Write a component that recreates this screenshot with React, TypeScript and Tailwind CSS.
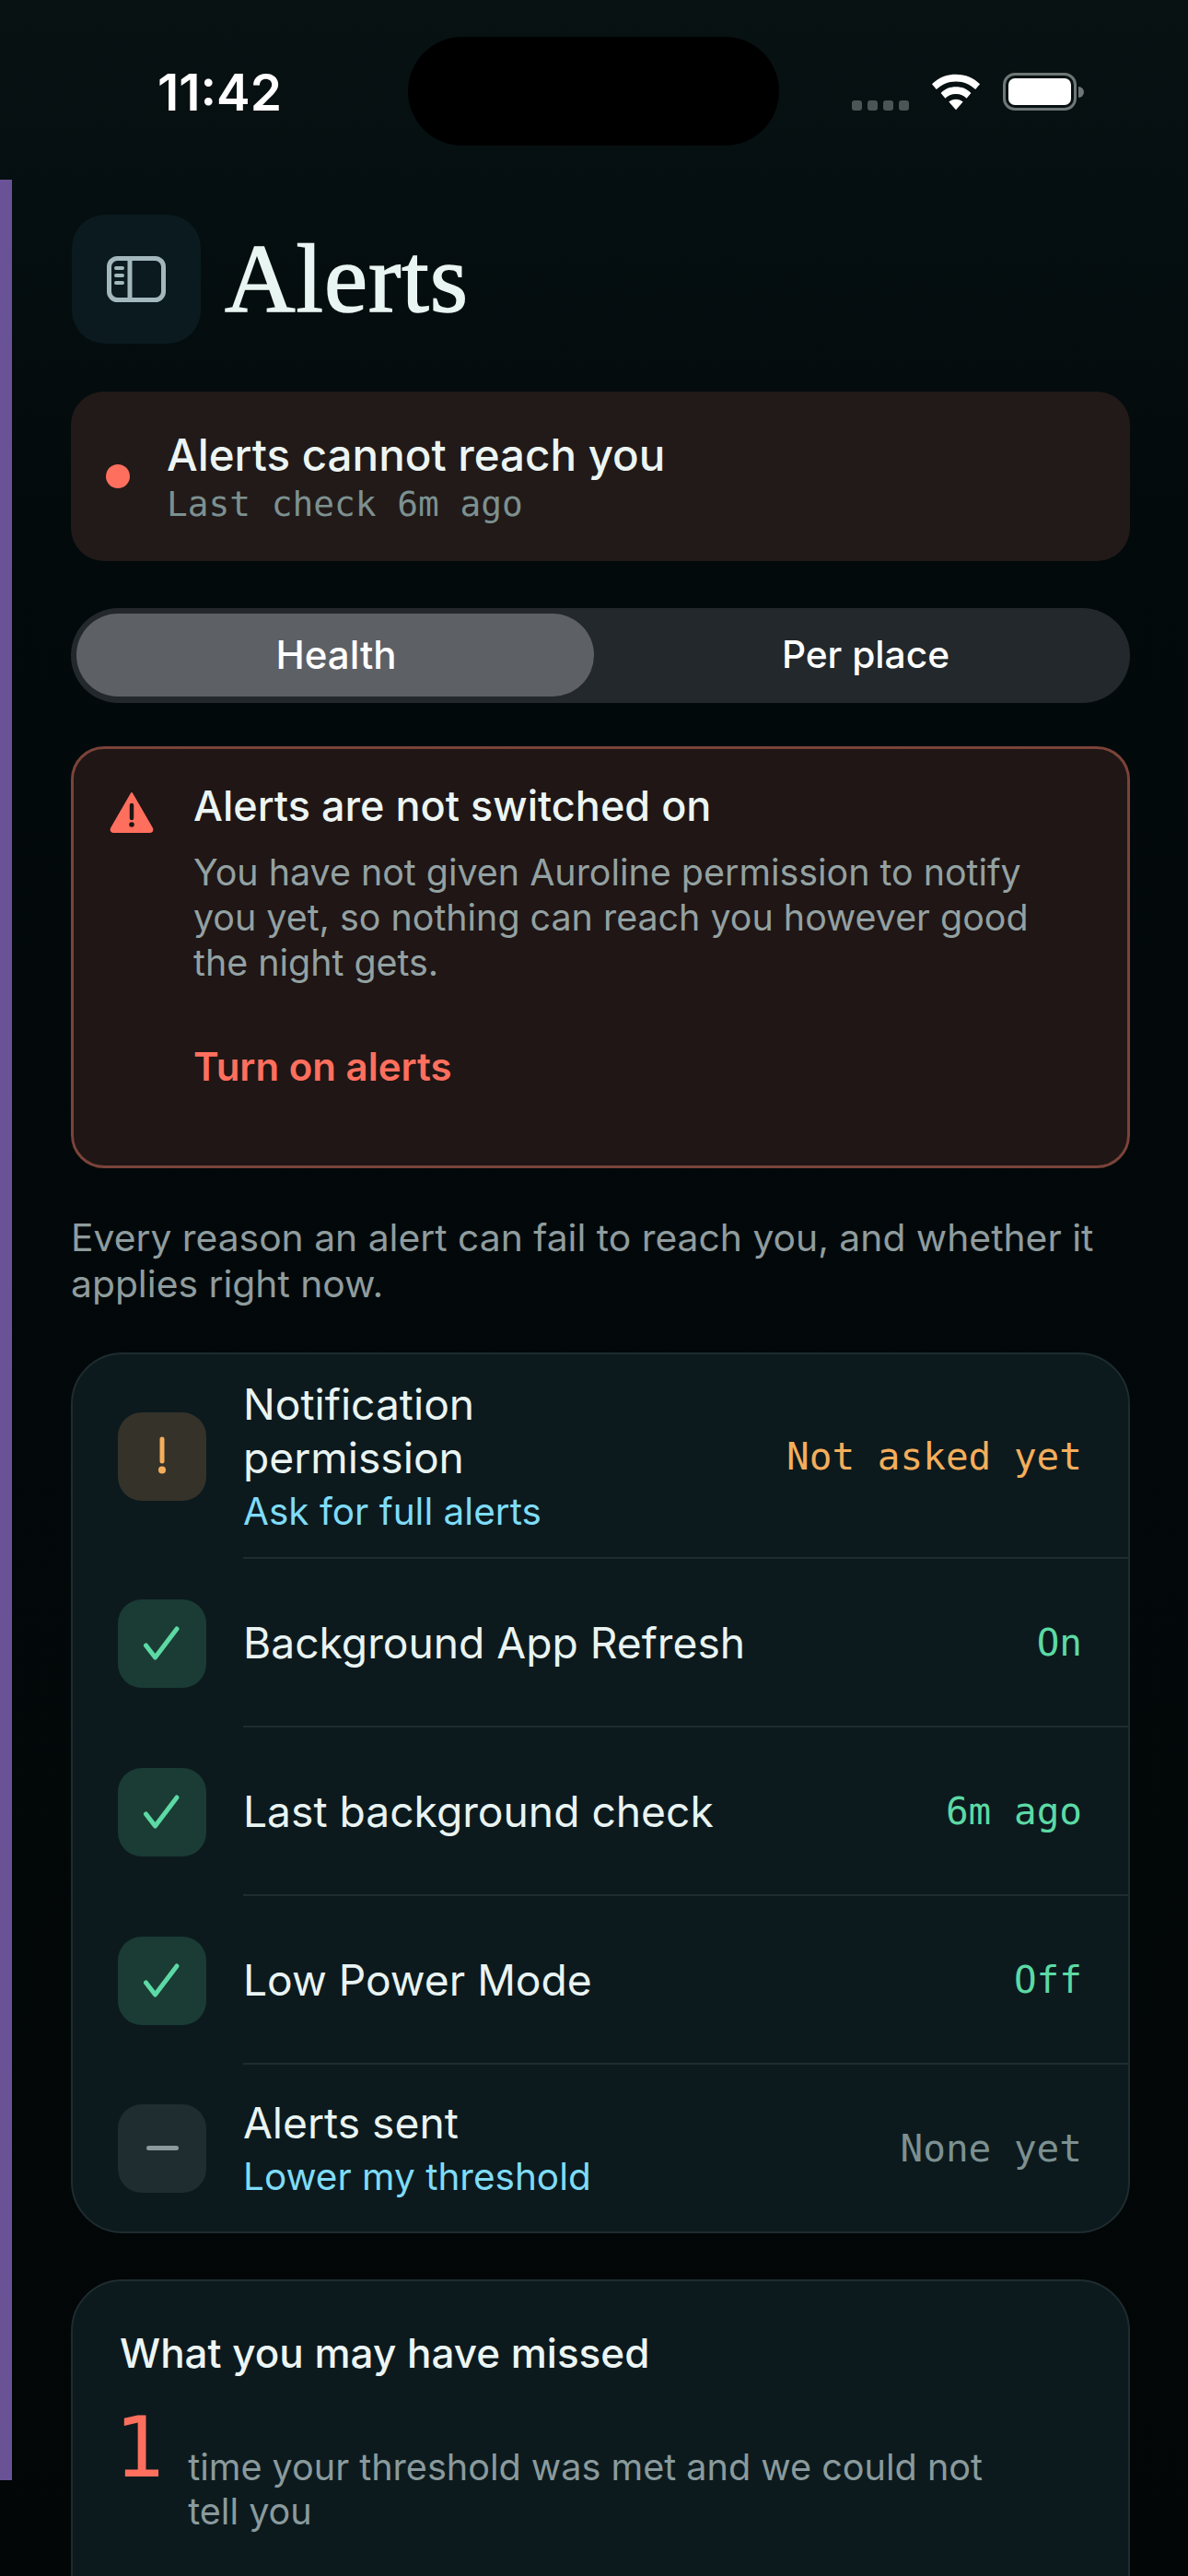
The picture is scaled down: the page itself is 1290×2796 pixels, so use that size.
import React from "react";

const sans = "font-['Inter','Noto_Sans',sans-serif]";
const mono = "font-['DejaVu_Sans_Mono','Liberation_Mono',monospace]";

function Tile({ kind }: { kind: "warn" | "ok" | "none" }) {
  const bg = kind === "warn" ? "bg-[#35322a]" : kind === "ok" ? "bg-[#1b3b35]" : "bg-[#1f2c30]";
  return (
    <div className={`flex h-[96px] w-[96px] shrink-0 items-center justify-center rounded-[26px] ${bg}`}>
      {kind === "warn" && (
        <svg width="20" height="44" viewBox="0 0 20 44">
          <path d="M10 3V27" stroke="#f4ae5b" strokeWidth="5" strokeLinecap="round" />
          <circle cx="10" cy="36.500" r="4" fill="#f4ae5b" />
        </svg>
      )}
      {kind === "ok" && (
        <svg width="44" height="40" viewBox="0 0 44 40" fill="none">
          <path d="M4.500 22L14.500 35L38 4" stroke="#5cd9a4" strokeWidth="5" strokeLinecap="round" strokeLinejoin="round" />
        </svg>
      )}
      {kind === "none" && <div className="h-[5px] w-[35px] rounded-full bg-[#8b9a9c]" />}
    </div>
  );
}

function Row({
  kind,
  title,
  link,
  value,
  valueColor,
  height,
  last,
}: {
  kind: "warn" | "ok" | "none";
  title: React.ReactNode;
  link?: string;
  value: string;
  valueColor: string;
  height: string;
  last?: boolean;
}) {
  return (
    <div className={`flex items-center pl-[49px] ${height}`}>
      <Tile kind={kind} />
      <div className={`ml-[40px] flex h-full flex-1 items-center justify-between pr-[50px] ${last ? "" : "border-b-2 border-[#1e2c30]"}`}>
        <div>
          <div className="text-[46.200px] leading-[58px] text-[#e9f4f2]">{title}</div>
          {link && <div className="mt-[5px] text-[40.500px] leading-[50px] text-[#7fdcf8]">{link}</div>}
        </div>
        <div className={`${mono} mt-[3px] text-[41px] ${valueColor}`}>{value}</div>
      </div>
    </div>
  );
}

export default function App() {
  return (
    <div className={`${sans} relative h-[2796px] w-[1290px] overflow-hidden bg-gradient-to-b from-[#081213] via-[#030a0c] via-[20%] to-[#020607]`}>
      <div className="absolute left-0 top-[195px] h-[2497px] w-[13px] bg-[#6a5296]" />

      {/* status bar */}
      <div className="relative flex h-[198px] items-start justify-between pl-[171px] pr-[113px]">
        <div className="pt-[72px] text-[55px] font-semibold leading-[56px] text-white">11:42</div>
        <div className="absolute left-[443px] top-[40px] h-[118px] w-[403px] rounded-[59px] bg-black" />
        <div className="flex items-end gap-[24px] pt-[79px]">
          <div className="flex gap-[6px]">
            <span className="h-[11px] w-[11px] rounded-[3px] bg-[#4b5555]" />
            <span className="h-[11px] w-[11px] rounded-[3px] bg-[#4b5555]" />
            <span className="h-[11px] w-[11px] rounded-[3px] bg-[#4b5555]" />
            <span className="h-[11px] w-[11px] rounded-[3px] bg-[#4b5555]" />
          </div>
          <svg width="54" height="40" viewBox="0 0 56 40" fill="white">
            <path d="M28 0C17 0 8 4 1 11L6 17C12 11 19 8 28 8C37 8 44 11 50 17L55 11C48 4 39 0 28 0Z" />
            <path d="M28 14C21 14 16 16 11 21L16 27C19 24 23 22 28 22C33 22 37 24 40 27L45 21C40 16 35 14 28 14Z" />
            <path d="M28 28C25 28 22 29 20 31L28 40L36 31C34 29 31 28 28 28Z" />
          </svg>
          <div className="flex items-center">
            <div className="h-[41px] w-[80px] rounded-[13px] border-[3px] border-[#6e7676] p-[3px]">
              <div className="h-full w-full rounded-[7px] bg-white" />
            </div>
            <div className="ml-[2px] h-[12px] w-[6px] rounded-r-full bg-[#6e7676]" />
          </div>
        </div>
      </div>

      <div className="pl-[77px] pr-[63px]">
        {/* header */}
        <div className="mt-[35px] flex h-[140px] items-center gap-[26px] pl-[1px]">
          <div className="flex h-[140px] w-[140px] items-center justify-center rounded-[36px] bg-[#0a1a1e]">
            <svg width="64" height="50" viewBox="0 0 64 50" fill="none">
              <rect x="2.500" y="2.500" width="59" height="45" rx="9" stroke="#a3b8bc" strokeWidth="5" />
              <path d="M25 3V47" stroke="#a3b8bc" strokeWidth="5" />
              <path d="M10 13H17M10 21H17M10 29H17" stroke="#a3b8bc" strokeWidth="4" strokeLinecap="round" />
            </svg>
          </div>
          <h1 className="font-['Liberation_Serif',serif] text-[106px] font-normal leading-none tracking-[1px] text-[#e9f5f2] [-webkit-text-stroke:1.500px_#e9f5f2]">Alerts</h1>
        </div>

        {/* status */}
        <div className="mt-[52px] flex h-[184px] items-center rounded-[36px] bg-[#211a18] pl-[38px]">
          <div className="h-[26px] w-[26px] rounded-full bg-[#ff6f5e]" />
          <div className="ml-[40px]">
            <div className="text-[47.500px] font-medium leading-[56px] text-[#ecf5f3]">Alerts cannot reach you</div>
            <div className={`${mono} mt-[3px] text-[37.800px] leading-[44px] text-[#7d9090]`}>Last check 6m ago</div>
          </div>
        </div>

        {/* segmented */}
        <div className="mt-[51px] flex h-[103px] rounded-full bg-[#22282c] pb-[7px] pl-[6px] pr-[6px] pt-[6px]">
          <div className="flex h-full w-[562px] items-center justify-center rounded-full bg-[#5d6064] pb-[2px] pl-[2px] text-[42px] font-medium text-white">Health</div>
          <div className="flex h-full flex-1 items-center justify-center pl-[14px] text-[40.700px] font-medium text-white">Per place</div>
        </div>

        {/* alert */}
        <div className="mt-[47px] flex h-[458px] gap-[43px] rounded-[36px] border-[3px] border-[#7a4339] bg-[#1f1615] pl-[39px] pr-[50px] pt-[37px]">
          <svg className="mt-[8px] shrink-0" width="48" height="46" viewBox="0 0 48 46">
            <path d="M24 3L46 41C47 43 46 45 44 45H4C2 45 1 43 2 41L24 3Z" fill="#ff6f5e" stroke="#ff6f5e" strokeWidth="2" strokeLinejoin="round" />
            <path d="M24 16V30" stroke="#1f1615" strokeWidth="4.500" strokeLinecap="round" />
            <circle cx="24" cy="37" r="2.800" fill="#1f1615" />
          </svg>
          <div>
            <div className="text-[45px] font-medium leading-[50px] text-[#ecf5f3]">Alerts are not switched on</div>
            <div className="mt-[23px] text-[39.400px] leading-[49px] text-[#93a1a2]">
              You have not given Auroline permission to notify you yet, so nothing can reach you however good the night gets.
            </div>
            <div className="mt-[63px] text-[42px] font-semibold leading-[50px] text-[#ff6f5e]">Turn on alerts</div>
          </div>
        </div>

        <p className="mt-[50px] text-[40.800px] leading-[50px] text-[#8f9c9e]">
          Every reason an alert can fail to reach you, and whether it applies right now.
        </p>

        {/* checks */}
        <div className="mt-[50px] overflow-hidden rounded-[56px] border-2 border-[#1e2c30] bg-[#0c1a1e]">
          <Row kind="warn" title={<>Notification<br />permission</>} link="Ask for full alerts" value="Not asked yet" valueColor="text-[#f4ae5b]" height="h-[222px]" />
          <Row kind="ok" title="Background App Refresh" value="On" valueColor="text-[#5cd9a4]" height="h-[183px]" />
          <Row kind="ok" title="Last background check" value="6m ago" valueColor="text-[#5cd9a4]" height="h-[183px]" />
          <Row kind="ok" title="Low Power Mode" value="Off" valueColor="text-[#5cd9a4]" height="h-[183px]" />
          <Row kind="none" title="Alerts sent" link="Lower my threshold" value="None yet" valueColor="text-[#7d9090]" height="h-[181px]" last />
        </div>

        {/* missed */}
        <div className="mt-[50px] h-[600px] rounded-[56px] border-2 border-[#1e2c30] bg-[#0c1a1e] pl-[51px] pr-[100px] pt-[50px]">
          <div className="text-[44px] font-medium leading-[56px] text-[#ecf5f3]">What you may have missed</div>
          <div className="mt-[24px] flex items-start gap-[26px]">
            <div className={`${mono} -ml-[6px] pt-[3px] text-[90px] leading-[96px] text-[#ff6f5e]`}>1</div>
            <div className="pt-[48px] text-[39.600px] leading-[48px] text-[#8a9a9c]">time your threshold was met and we could not tell you</div>
          </div>
        </div>
      </div>
    </div>
  );
}
